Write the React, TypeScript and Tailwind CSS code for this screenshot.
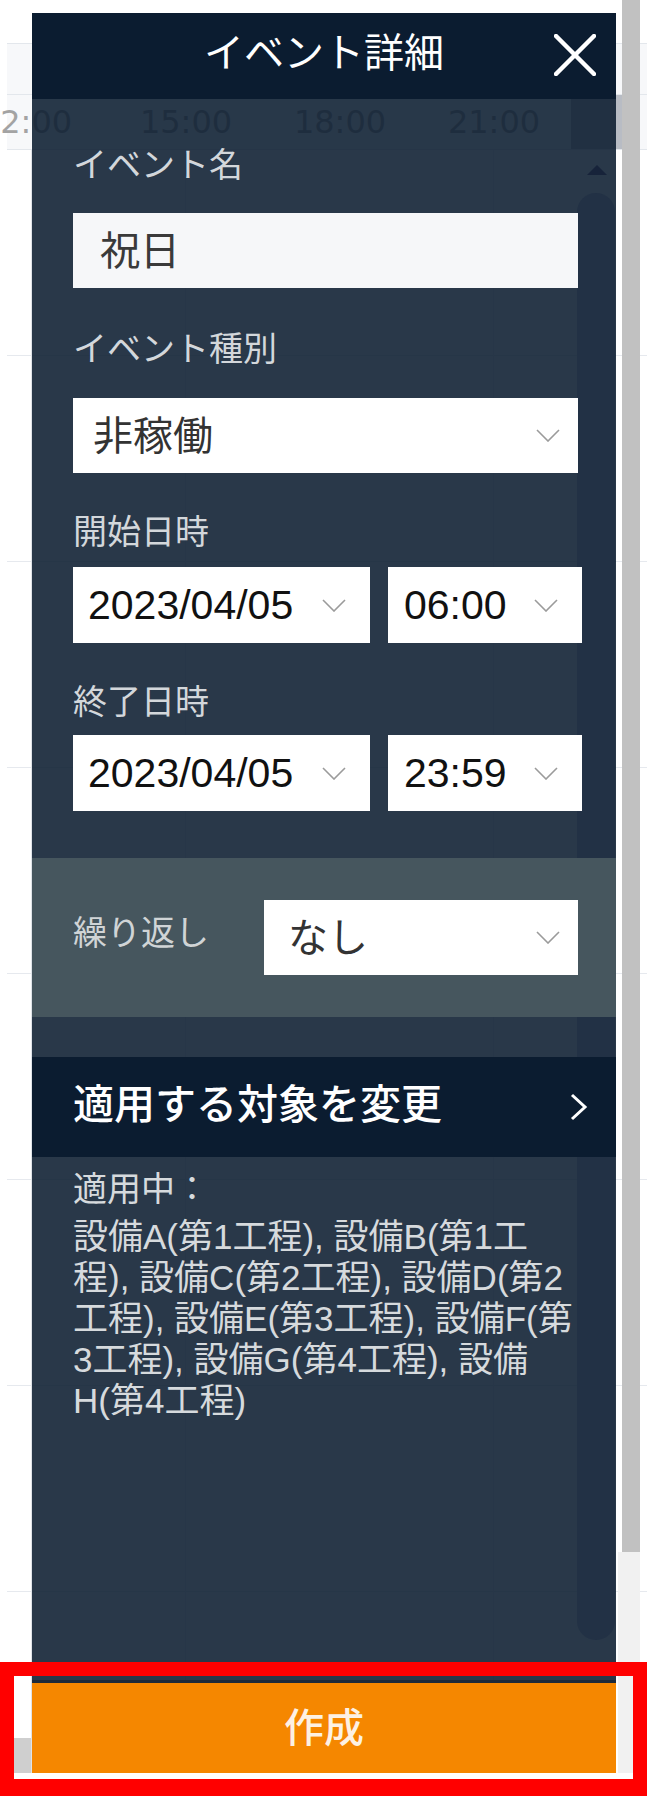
import React from "react";

const Chevron = () => (
  <svg width="24" height="13" viewBox="0 0 24 13" fill="none" className="shrink-0">
    <polyline points="1,1 12,12 23,1" stroke="#9b9b9b" strokeWidth="1.6" />
  </svg>
);

const Label = ({ children, className = "" }: { children: React.ReactNode; className?: string }) => (
  <div className={"text-[34px] leading-[40px] text-[#d3d7db] " + className}>{children}</div>
);

export default function App() {
  return (
    <div className="relative h-[1796px] w-[647px] overflow-hidden bg-white font-['Liberation_Sans','Noto_Sans_CJK_JP',sans-serif]">
      {/* calendar beneath */}
      <div className="relative ml-[7px] flex h-[1773px] flex-col">
        <div className="h-[43px] shrink-0" />
        <div className="h-[51px] shrink-0 border-t border-[#e3e7ec] bg-[#f7f8fa]" />
        <div className="flex h-[56px] shrink-0 border-y border-[#e3e7ec] bg-[#f7f8fa]">
          <div className="-ml-[64px] flex flex-1 items-center font-['DejaVu_Sans',sans-serif] text-[32px] leading-none text-[#a3a3a3]">
            <div className="w-[166px] shrink-0 text-center">12:00</div>
            <div className="w-[154px] shrink-0 text-center">15:00</div>
            <div className="w-[154px] shrink-0 text-center">18:00</div>
            <div className="w-[154px] shrink-0 text-center">21:00</div>
          </div>
          <div className="mr-[31px] w-[51px] shrink-0 bg-[#b8bcc4]" />
        </div>
        <div className="relative flex flex-1 flex-col">
          <div className="absolute bottom-0 left-[24px] top-0 w-px bg-[#dfe3e8]" />
          <div className="absolute bottom-0 left-[178px] top-0 w-px bg-[#eceff3]" />
          <div className="absolute bottom-0 left-[486px] top-0 w-px bg-[#eceff3]" />
          <div className="h-[206px] shrink-0 border-b border-[#e6e9ee]" />
          <div className="h-[206px] shrink-0 border-b border-[#e6e9ee]" />
          <div className="h-[206px] shrink-0 border-b border-[#e6e9ee]" />
          <div className="h-[206px] shrink-0 border-b border-[#e6e9ee]" />
          <div className="h-[206px] shrink-0 border-b border-[#e6e9ee]" />
          <div className="h-[206px] shrink-0 border-b border-[#e6e9ee]" />
          <div className="h-[206px] shrink-0 border-b border-[#e6e9ee]" />
          <div className="mt-auto -ml-[7px] h-[35px] w-[40px] bg-[#cfcfcf]" />
        </div>
      </div>

      {/* event detail panel */}
      <div className="absolute left-[32px] top-[13px] z-10 flex h-[1760px] w-[584px] flex-col">
        <div className="relative flex h-[86px] shrink-0 items-center justify-center bg-[#0b1c30]">
          <span className="-mt-[6px] text-[40px] leading-none text-white">イベント詳細</span>
          <svg width="42" height="42" viewBox="0 0 42 42" className="absolute right-[20px] top-[21px]">
            <line x1="2" y1="2" x2="40" y2="40" stroke="white" strokeWidth="4.5" strokeLinecap="round" />
            <line x1="40" y1="2" x2="2" y2="40" stroke="white" strokeWidth="4.5" strokeLinecap="round" />
          </svg>
        </div>

        <div className="relative flex flex-1 flex-col bg-[rgba(11,28,48,0.88)]">
          {/* scroll bar */}
          <svg width="20" height="10" viewBox="0 0 20 10" className="absolute left-[555px] top-[66px]">
            <polygon points="0,10 10,0 20,10" fill="#17233a" />
          </svg>
          <div className="absolute left-[545px] top-[94px] h-[1447px] w-[38px] rounded-full bg-[#223145]" />

          <div className="relative flex flex-col pl-[41px] pt-[46px]">
            <Label>イベント名</Label>
            <div className="mt-[28px] flex h-[75px] w-[505px] items-center bg-[#f6f7f9] pl-[27px] text-[40px] leading-none text-[#3a3a3a]">
              祝日
            </div>

            <Label className="mt-[41px]">イベント種別</Label>
            <div className="mt-[29px] flex h-[75px] w-[505px] items-center justify-between bg-white pl-[20px] pr-[18px]">
              <span className="text-[40px] leading-none text-[#333]">非稼働</span>
              <Chevron />
            </div>

            <Label className="mt-[39px]">開始日時</Label>
            <div className="mt-[15px] flex w-[509px] gap-[18px]">
              <div className="flex h-[76px] w-[297px] items-center justify-between bg-white pl-[15px] pr-[24px]">
                <span className="text-[41px] leading-none text-[#111]">2023/04/05</span>
                <Chevron />
              </div>
              <div className="flex h-[76px] w-[194px] items-center justify-between bg-white pl-[16px] pr-[24px]">
                <span className="text-[41px] leading-none text-[#111]">06:00</span>
                <Chevron />
              </div>
            </div>

            <Label className="mt-[39px]">終了日時</Label>
            <div className="mt-[13px] flex w-[509px] gap-[18px]">
              <div className="flex h-[76px] w-[297px] items-center justify-between bg-white pl-[15px] pr-[24px]">
                <span className="text-[41px] leading-none text-[#111]">2023/04/05</span>
                <Chevron />
              </div>
              <div className="flex h-[76px] w-[194px] items-center justify-between bg-white pl-[16px] pr-[24px]">
                <span className="text-[41px] leading-none text-[#111]">23:59</span>
                <Chevron />
              </div>
            </div>
          </div>

          {/* repeat */}
          <div className="relative mt-[47px] flex h-[159px] items-center justify-between bg-[#46565e] pl-[41px] pr-[38px]">
            <span className="-mt-[10px] text-[34px] leading-[40px] text-[#d0d4d6]">繰り返し</span>
            <div className="flex h-[75px] w-[314px] items-center justify-between bg-white pl-[24px] pr-[18px]">
              <span className="text-[40px] leading-none text-[#333]">なし</span>
              <Chevron />
            </div>
          </div>

          {/* target row */}
          <div className="relative mt-[40px] flex h-[100px] items-center justify-between bg-[#0b1c30] pl-[41px] pr-[28px]">
            <span className="-mt-[4px] text-[41px] font-medium leading-none text-white">適用する対象を変更</span>
            <svg width="18" height="28" viewBox="0 0 18 28" fill="none">
              <polyline points="2,2 15,14 2,26" stroke="white" strokeWidth="3" />
            </svg>
          </div>

          <div className="relative flex flex-col pl-[41px] text-[#d6dadd]">
            <div className="mt-[12px] text-[34px] leading-[40px]">適用中：</div>
            <div className="mt-[7px] text-[35px] leading-[41px]">
              <div className="whitespace-nowrap">設備A(第1工程), 設備B(第1工</div>
              <div className="whitespace-nowrap">程), 設備C(第2工程), 設備D(第2</div>
              <div className="whitespace-nowrap">工程), 設備E(第3工程), 設備F(第</div>
              <div className="whitespace-nowrap">3工程), 設備G(第4工程), 設備</div>
              <div className="whitespace-nowrap">H(第4工程)</div>
            </div>
          </div>
        </div>

        <div className="h-[3px] shrink-0 bg-[#1d2a3a]" />
        <button className="flex h-[90px] shrink-0 items-center justify-center bg-[#f58700] text-[40px] font-medium leading-none text-[#fdf1e4]">
          作成
        </button>
      </div>

      {/* page scrollbar */}
      <div className="absolute right-[7px] top-0 z-20 h-[1552px] w-[18px] bg-[#c1c1c1]" />
      <div className="absolute right-[7px] top-[1552px] z-20 h-[221px] w-[22px] bg-[#f1f1f1]" />

      {/* red highlight */}
      <div className="absolute left-0 top-[1662px] z-30 h-[134px] w-[647px] border-[14px] border-b-[17px] border-[#ff0000]" />
    </div>
  );
}
